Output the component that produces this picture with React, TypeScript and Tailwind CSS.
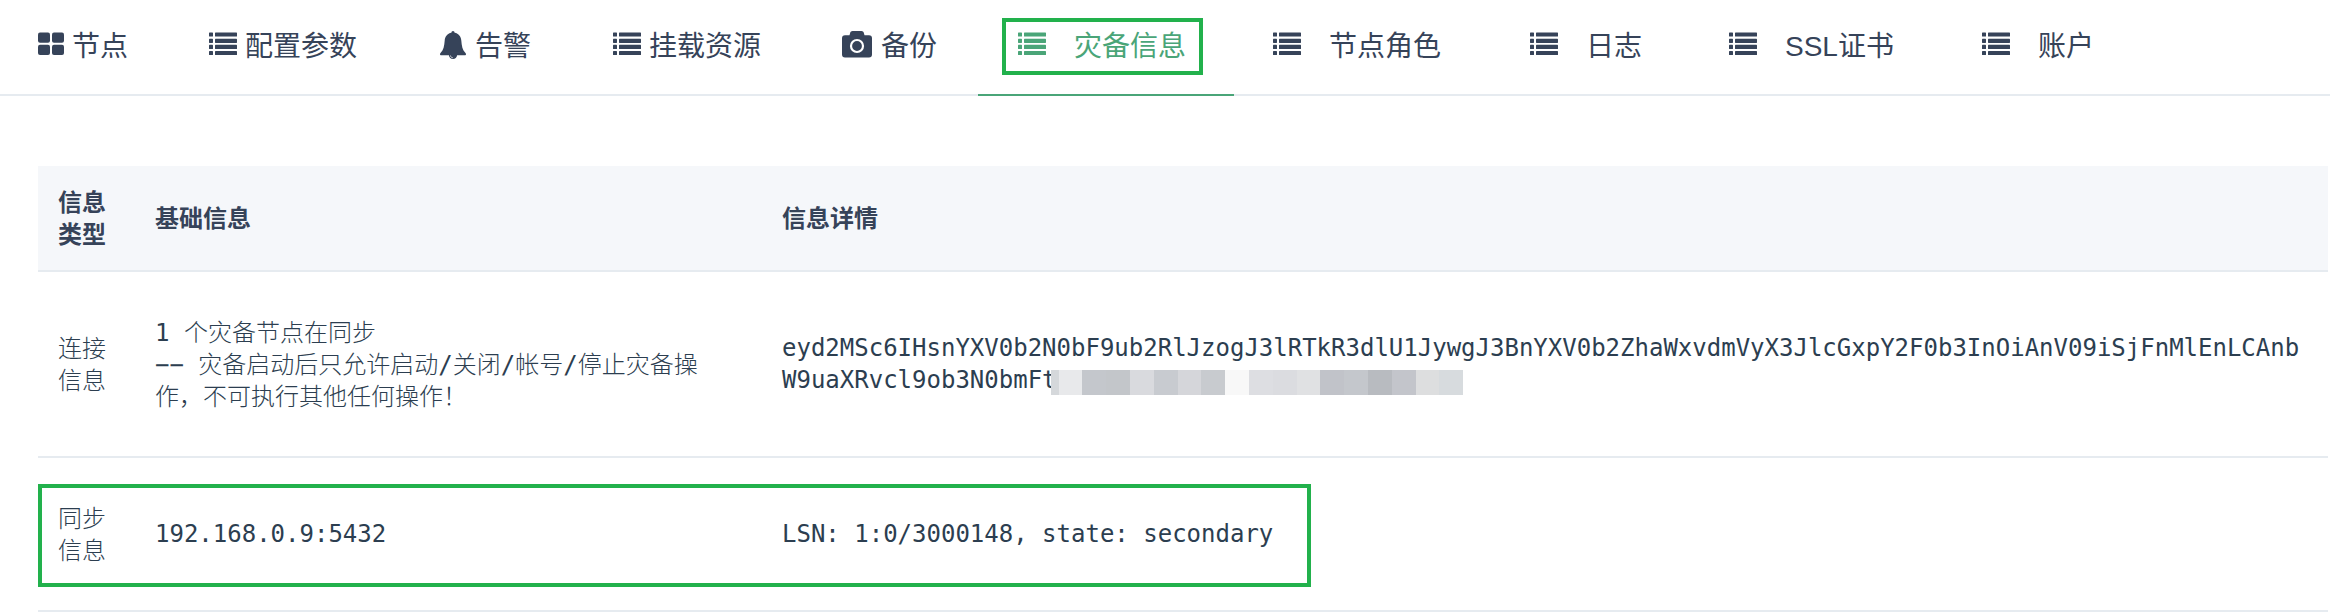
import React from "react";

type IconKind = "grid" | "list" | "bell" | "camera";

function Icon({ kind }: { kind: IconKind }) {
  if (kind === "grid")
    return (
      <svg width="26" height="24" viewBox="0 0 26 24" fill="currentColor" className="block">
        <rect x="0" y="0.4" width="12" height="10.4" rx="2" />
        <rect x="14" y="0.4" width="12" height="10.4" rx="2" />
        <rect x="0" y="12.7" width="12" height="10.4" rx="2" />
        <rect x="14" y="12.7" width="12" height="10.4" rx="2" />
      </svg>
    );
  if (kind === "bell")
    return (
      <svg width="26" height="28" viewBox="0 0 26 28" fill="currentColor" className="block">
        <path d="M13 0c.9 0 1.6.7 1.6 1.8C18.700 2.500 21 5.600 21.300 9.500c.4 5.500 1.200 9.500 4 12.300.5.500.7.9.7 1.400 0 .7-.5 1-1.200 1h-7.700c-.2 2.200-1.900 3.800-4.100 3.800s-3.900-1.600-4.100-3.800H1.200c-.7 0-1.200-.3-1.200-1 0-.5.2-.9.700-1.400 2.800-2.800 3.600-6.800 4-12.300C5 5.600 7.300 2.500 11.400 1.800 11.400.7 12.100 0 13 0z" />
        <path d="M10.500 24.500c0 1.300 1 2.200 2.300 2.200" fill="none" stroke="#fff" strokeWidth="0.7" />
      </svg>
    );
  if (kind === "camera")
    return (
      <svg width="30" height="27" viewBox="0 0 30 27" className="block">
        <path
          fill="currentColor"
          d="M10.500 0h9c1.200 0 2 .7 2.300 1.800l.7 2.400H27a3 3 0 0 1 3 3V23.500a3 3 0 0 1-3 3H3a3 3 0 0 1-3-3V7.200a3 3 0 0 1 3-3h4.500l.7-2.400C8.500.7 9.300 0 10.500 0z"
        />
        <circle cx="15" cy="15" r="6" fill="none" stroke="#fff" strokeWidth="2.2" />
      </svg>
    );
  return (
    <svg width="28" height="24" viewBox="0 0 28 24" fill="currentColor" className="block">
      {[0.4, 6.7, 12.8, 18.900].map((y) => (
        <g key={y}>
          <rect x="0" y={y} width="4" height="4.200" rx="0.6" />
          <rect x="6" y={y} width="22" height="4.200" rx="0.6" />
        </g>
      ))}
    </svg>
  );
}

const tabs: { kind: IconKind; label: string; width: string; iconBox: string; active?: boolean }[] = [
  { kind: "grid", label: "节点", width: "w-[169px] pl-[38px]", iconBox: "w-[34px] pt-8" },
  { kind: "list", label: "配置参数", width: "w-[231px] pl-10", iconBox: "w-9 pt-8" },
  { kind: "bell", label: "告警", width: "w-[172px] pl-10", iconBox: "w-[35px] pt-[31px]" },
  { kind: "list", label: "挂载资源", width: "w-[230px] pl-[41px]", iconBox: "w-9 pt-8" },
  { kind: "camera", label: "备份", width: "w-44 pl-10", iconBox: "w-[39px] pt-[31px]" },
  { kind: "list", label: "灾备信息", width: "w-64 pl-10", iconBox: "w-14 pt-8", active: true },
  { kind: "list", label: "节点角色", width: "w-64 pl-[39px]", iconBox: "w-14 pt-8" },
  { kind: "list", label: "日志", width: "w-[199px] pl-10", iconBox: "w-14 pt-8" },
  { kind: "list", label: "SSL证书", width: "w-[253px] pl-10", iconBox: "w-14 pt-8" },
  { kind: "list", label: "账户", width: "w-[200px] pl-10", iconBox: "w-14 pt-8" },
];

const mosaic = [
  "bg-[#e8e9eb]", "bg-[#c4c7cc]", "bg-[#c3c6ca]", "bg-[#d9dade]", "bg-[#c8cbd0]", "bg-[#d5d6da]",
  "bg-[#c8cbcf]", "bg-[#f8f8f8]", "bg-[#dddee2]", "bg-[#dbdce0]", "bg-[#e0e1e3]", "bg-[#c1c3c9]",
  "bg-[#c4c7cc]", "bg-[#b8bbc0]", "bg-[#c3c5cb]", "bg-[#dddedf]", "bg-[#d7dbde]",
];

function Row({ a, b, c, className }: { a: React.ReactNode; b: React.ReactNode; c: React.ReactNode; className: string }) {
  return (
    <div className={`grid grid-cols-[97px_627px_1fr] items-center border-b-2 border-[#e6ebf0] pl-5 ${className}`}>
      <div>{a}</div>
      <div className="whitespace-nowrap">{b}</div>
      <div className="whitespace-nowrap">{c}</div>
    </div>
  );
}

export default function App() {
  return (
    <div className="h-[616px] w-[2330px] overflow-hidden bg-white font-['DejaVu_Sans_Mono','Noto_Sans_CJK_SC',monospace] text-2xl font-light leading-8 text-[#2c3e50]">
      <nav className="flex h-24 border-b-2 border-[#e6ebf0] font-['Liberation_Sans','Noto_Sans_CJK_SC',sans-serif] text-[28px] font-normal text-[#364359]">
        {tabs.map((t) => (
          <div key={t.label} className={`relative flex h-24 shrink-0 whitespace-nowrap ${t.width} ${t.active ? "border-b-2 border-[#4aa578] text-[#4aa578]" : ""}`}>
            <span className={`shrink-0 ${t.iconBox}`}>
              <Icon kind={t.kind} />
            </span>
            <span className="pt-[27px] leading-10">{t.label}</span>
            {t.active && <div className="absolute left-6 top-[18px] h-[57px] w-[201px] border-4 border-[#22b14c]" />}
          </div>
        ))}
      </nav>
      <main className="relative ml-[38px] mr-[2px] pt-[70px]">
        <Row
          className="h-[106px] bg-[#f5f7fa] pb-[3px] font-['Noto_Sans_CJK_SC',sans-serif] font-bold text-[#364359]"
          a={<>信息<br />类型</>}
          b="基础信息"
          c="信息详情"
        />
        <Row
          className="h-[186px]"
          a={<div className="pt-[2px]">连接<br />信息</div>}
          b={<div className="pt-[2px]">1 个灾备节点在同步<br />−− 灾备启动后只允许启动/关闭/帐号/停止灾备操<br />作，不可执行其他任何操作！</div>}
          c={
            <>
              <div>eyd2MSc6IHsnYXV0b2N0bF9ub2RlJzogJ3lRTkR3dlU1JywgJ3BnYXV0b2ZhaWxvdmVyX3JlcGxpY2F0b3InOiAnV09iSjFnMlEnLCAnb</div>
              <div className="flex h-8">
                <span>W9uaXRvcl9ob3N0bmFt</span>
                <span className="z-10 -ml-[6px] mt-[6px] h-[25px] w-2 bg-[#d5d8db]" />
                {mosaic.map((m, i) => (
                  <span key={i} className={`mt-[6px] h-[25px] w-[23.8px] ${m}`} />
                ))}
              </div>
            </>
          }
        />
        <Row
          className="h-[154px]"
          a={<div className="pt-[2px]">同步<br />信息</div>}
          b="192.168.0.9:5432"
          c="LSN: 1:0/3000148, state: secondary"
        />
        <div className="absolute left-0 top-[388px] h-[103px] w-[1273px] border-4 border-[#22b14c]" />
      </main>
    </div>
  );
}
